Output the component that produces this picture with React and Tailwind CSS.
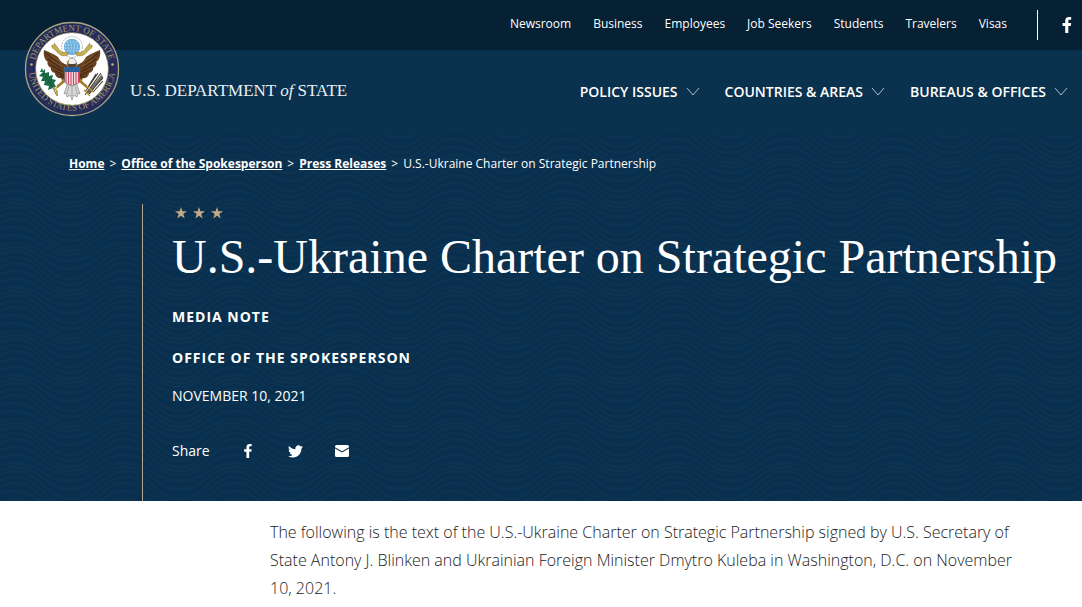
import { useId } from "react";

const topLinks = ["Newsroom", "Business", "Employees", "Job Seekers", "Students", "Travelers", "Visas"];
const mainLinks = ["Policy Issues", "Countries & Areas", "Bureaus & Offices"];
const crumbs = ["Home", "Office of the Spokesperson", "Press Releases"];

function Facebook({ className }) {
  return (
    <svg viewBox="0 0 10 18" className={className} fill="currentColor" aria-hidden="true">
      <path d="M3 18V10H0V6.800H3V4.300C3 1.500 4.500 0 7 0H9.700V3H8C7 3 6.500 3.500 6.500 4.500V6.800H9.700L9.200 10H6.500V18Z" />
    </svg>
  );
}

function Twitter({ className }) {
  return (
    <svg viewBox="0 0 24 24" className={className} fill="currentColor" aria-hidden="true">
      <path d="M23.950 4.570a10 10 0 0 1-2.820.770 4.960 4.960 0 0 0 2.160-2.720c-.950.550-2 .950-3.130 1.180a4.920 4.920 0 0 0-8.380 4.480C7.690 8.090 4.070 6.130 1.640 3.160a4.820 4.820 0 0 0-.670 2.480c0 1.710.870 3.210 2.190 4.100a4.900 4.900 0 0 1-2.230-.620v.060a4.920 4.920 0 0 0 3.950 4.830 5 5 0 0 1-2.210.080 4.940 4.940 0 0 0 4.600 3.420A9.870 9.870 0 0 1 0 19.540a13.990 13.990 0 0 0 7.550 2.210c9.050 0 14-7.500 14-13.980 0-.210 0-.420-.020-.630a9.940 9.940 0 0 0 2.460-2.550z" />
    </svg>
  );
}

function Mail({ className }) {
  return (
    <svg viewBox="0 0 14 12" className={className} fill="currentColor" aria-hidden="true">
      <path d="M1.500 0H12.500Q14 0 14 1.500V2.200L7 6.300L0 2.200V1.500Q0 0 1.500 0ZM0 3.500L7 7.600L14 3.500V10.500Q14 12 12.500 12H1.500Q0 12 0 10.500Z" />
    </svg>
  );
}

function Chevron() {
  return (
    <svg viewBox="0 0 14 9" className="h-[9px] w-3.5" fill="none" stroke="#a9bccb" aria-hidden="true">
      <path d="M1 1L7 8L13 1" />
    </svg>
  );
}

function Star() {
  return (
    <svg viewBox="0 0 12 12" className="size-3" fill="#c3a988" aria-hidden="true">
      <path d="M6 0L7.400 4.300H12L8.300 7L9.700 11.400L6 8.700L2.300 11.400L3.700 7L0 4.300H4.600Z" />
    </svg>
  );
}

function Wing() {
  return (
    <g>
      <path d="M44 44C39 43 36 40 34 36C30 33 25 31 20 29C19 35 21 39 24 41C22 42 25 46 27 47C26 49 29 52 31 52C31 55 34 58 37 57C38 60 41 61 43 59Z" fill="#67401f" />
      <path d="M22 32L35 43M24 38L37 47M27 44L39 51M31 50L41 55M36 55L42 57" stroke="#341f10" strokeWidth="0.800" fill="none" />
      <path d="M27 34L38 42M28 39L39 46" stroke="#9a6b3a" strokeWidth="0.600" fill="none" />
      <path d="M40 57C37 61 35 63 33 64L32 68L35 66L41 61Z" fill="#a5792e" />
      <path d="M44 34C38 36 36 34 32 30C30 27 27 28 28 24L31 25L30 22L34 27C37 32 40 32 44 31Z" fill="#c9b04e" stroke="#806620" strokeWidth="0.500" />
    </g>
  );
}

function Seal() {
  const id = useId();
  return (
    <svg viewBox="0 0 96 96" className="size-24 shrink-0" role="img" aria-label="Department of State seal">
      <defs>
        <path id={id + "t"} d="M10 48A38 38 0 0 1 86 48" />
        <path id={id + "b"} d="M4.500 46A43.500 43.500 0 0 0 91.500 46" />
      </defs>
      <circle cx="48" cy="48" r="46.500" fill="#252c5c" stroke="#aaa785" strokeWidth="1.300" />
      <circle cx="48" cy="48" r="36.500" fill="#fff" stroke="#77724f" strokeWidth="0.800" />
      <g fill="#a39b62" fontSize="9" fontFamily="'Liberation Serif', serif" textAnchor="middle">
        <text><textPath href={"#" + id + "t"} startOffset="50%">DEPARTMENT OF STATE</textPath></text>
        <text><textPath href={"#" + id + "b"} startOffset="50%">UNITED STATES OF AMERICA</textPath></text>
      </g>
      <circle cx="7.500" cy="43.500" r="1.200" fill="#c6b969" />
      <circle cx="88.500" cy="43.500" r="1.200" fill="#c6b969" />
      <circle cx="48" cy="26" r="10.500" fill="#fff" stroke="#a2a2a0" strokeWidth="0.800" strokeDasharray="2 1" />
      <circle cx="48" cy="26" r="8.200" fill="#75b3df" />
      <g fill="none" stroke="#d9eefa" strokeWidth="1" strokeDasharray="1 2">
        <path d="M43 21H53M41 24H55M41 27H55M43 30H53" />
      </g>
      <Wing />
      <g transform="matrix(-1 0 0 1 96 0)"><Wing /></g>
      <path d="M44 61L40 73L42 72L43 76L46 74L48 79L50 74L53 76L54 72L56 73L52 61Z" fill="#d8d8d7" stroke="#777" strokeWidth="0.600" />
      <path d="M45 64L43 73M48 64V75M51 64L53 73" stroke="#888" strokeWidth="0.600" />
      <path d="M43 46C43 41 45 37 48 37C51 37 53 41 53 46Z" fill="#eee" stroke="#75685a" strokeWidth="0.600" />
      <path d="M43 42L44 46H52L53 42L50 43H46Z" fill="#58452f" />
      <path d="M45 39L42 41L45 42Z" fill="#c39b3d" />
      <path d="M40.500 46H55.500V60C55.500 63 50 63 48 65C46 63 40.500 63 40.500 60Z" fill="#f4dce0" stroke="#52433d" strokeWidth="0.600" />
      <path d="M42 51V62M44.500 51V63M47 51V64M49.500 51V64M52 51V63M54.500 51V62" stroke="#cc4967" strokeWidth="1.100" />
      <path d="M40.500 46H55.500V51H40.500Z" fill="#28609e" />
      <path d="M18 47L16 51L19 51L15 55L19 56L17 60L21 60L20 64L25 65L24 69L29 67L32 66L30 62L32 59L28 58L29 54L25 55L25 51L21 52L21 48L19 50Z" fill="#176b48" />
      <path d="M19 52L26 61L33 75" stroke="#324d2a" strokeWidth="0.800" fill="none" />
      <path d="M29 66L33 70L33 75" stroke="#bf9833" strokeWidth="1.600" fill="none" />
      <path d="M62 72L78 53L79 58L71 66L66 73Z" fill="#77716a" />
      <path d="M61 71L74 52M61 74L77 52M65 73L79 56M69 71L79 60M64 66L72 53" stroke="#433e36" strokeWidth="1.100" fill="none" />
      <path d="M60 69L66 75M64 66L69 71" stroke="#bf9833" strokeWidth="1.400" />
    </svg>
  );
}

const waveLines = [
  [0, 14],
  [6, 14],
  [12, 14],
  [18, 12],
  [24, 10],
  [31, 9],
  [37, 11],
];

function Waves() {
  const id = useId();
  return (
    <svg className="absolute inset-0 h-full w-full" aria-hidden="true">
      <defs>
        <pattern id={id} width="110" height="44" patternUnits="userSpaceOnUse" x="70" y="0">
          <g fill="none" stroke="#173659" strokeWidth="2" opacity="0.300">
            {[-44, 0, 44].map((shift) =>
              waveLines.map(([y, a]) => (
                <path
                  key={shift + y}
                  d={`M-2 ${shift + y + a}H0C24 ${shift + y + a} 31 ${shift + y - a} 55 ${shift + y - a}S86 ${shift + y + a} 110 ${shift + y + a}H112`}
                />
              ))
            )}
          </g>
        </pattern>
      </defs>
      <rect width="100%" height="100%" fill={`url(#${id})`} />
    </svg>
  );
}

export default function App() {
  return (
    <div className="min-h-screen bg-white font-['Open_Sans','Noto_Sans',sans-serif] text-white">
      <header className="relative z-10">
        <div className="flex h-[50px] items-center justify-end bg-[#062034] pr-2.5">
          <nav aria-label="Audiences" className="flex gap-[22px] pb-0.5 text-[12px] leading-5">
            {topLinks.map((label) => (
              <a key={label} href="#">{label}</a>
            ))}
          </nav>
          <a href="#" aria-label="Facebook" className="ml-[30px] flex h-[30px] items-center border-l border-white pl-6">
            <Facebook className="h-4 w-2.5" />
          </a>
        </div>
        <div className="flex h-[83px] items-center justify-between bg-[#0a314d] pr-3.5 pl-6">
          <a href="#" className="-mt-[46px] flex items-center gap-2.5">
            <Seal />
            <span className="mt-11 font-['Liberation_Serif',serif] text-[17px] leading-6 text-[#e6f0f7]">
              U.S. DEPARTMENT <em>of</em> STATE
            </span>
          </a>
          <nav aria-label="Main" className="flex gap-[25px] text-[14px] leading-5 font-semibold">
            {mainLinks.map((label) => (
              <button key={label} type="button" className="flex items-center gap-2 uppercase">
                {label}
                <Chevron />
              </button>
            ))}
          </nav>
        </div>
      </header>

      <main>
        <section className="relative bg-[#08304e] pt-[21px]">
          <Waves />
          <nav aria-label="Breadcrumb" className="relative ml-[69px] flex gap-[5px] text-[12px] leading-5">
            {crumbs.map((label) => (
              <span key={label} className="flex gap-[5px]">
                <a href="#" className="font-bold underline">{label}</a>
                <span>&gt;</span>
              </span>
            ))}
            <span>U.S.-Ukraine Charter on Strategic Partnership</span>
          </nav>
          <div className="relative mt-[30px] ml-[142px] border-l border-[#b5a58f] pb-10 pl-[29px]">
            <div className="flex gap-1.5 pt-[3px] pl-[3px]">
              <Star />
              <Star />
              <Star />
            </div>
            <h1 className="mt-2 font-['Liberation_Serif',serif] text-[48px] leading-[60px] whitespace-nowrap">
              U.S.-Ukraine Charter on Strategic Partnership
            </h1>
            <p className="mt-5 text-[14px] leading-5 font-bold tracking-[1px] uppercase">Media Note</p>
            <p className="mt-[21px] text-[14px] leading-5 font-bold tracking-[1px] uppercase">Office of the Spokesperson</p>
            <p className="mt-[18px] text-[14px] leading-5 uppercase">November 10, 2021</p>
            <div className="mt-[35px] flex items-center text-[14px] leading-5">
              <span>Share</span>
              <a href="#" aria-label="Share on Facebook" className="ml-[34px]"><Facebook className="h-3.5 w-2" /></a>
              <a href="#" aria-label="Share on Twitter" className="ml-9"><Twitter className="size-[15px]" /></a>
              <a href="#" aria-label="Share by email" className="ml-8"><Mail className="h-3 w-3.5" /></a>
            </div>
          </div>
        </section>
        <article className="mr-[60px] ml-[270px] pt-[17px] text-[16px] leading-7 font-[330] text-[#222]">
          <p>
            The following is the text of the U.S.-Ukraine Charter on Strategic Partnership signed by U.S. Secretary of
            State Antony J. Blinken and Ukrainian Foreign Minister Dmytro Kuleba in Washington, D.C. on November 10, 2021.
          </p>
        </article>
      </main>
    </div>
  );
}
